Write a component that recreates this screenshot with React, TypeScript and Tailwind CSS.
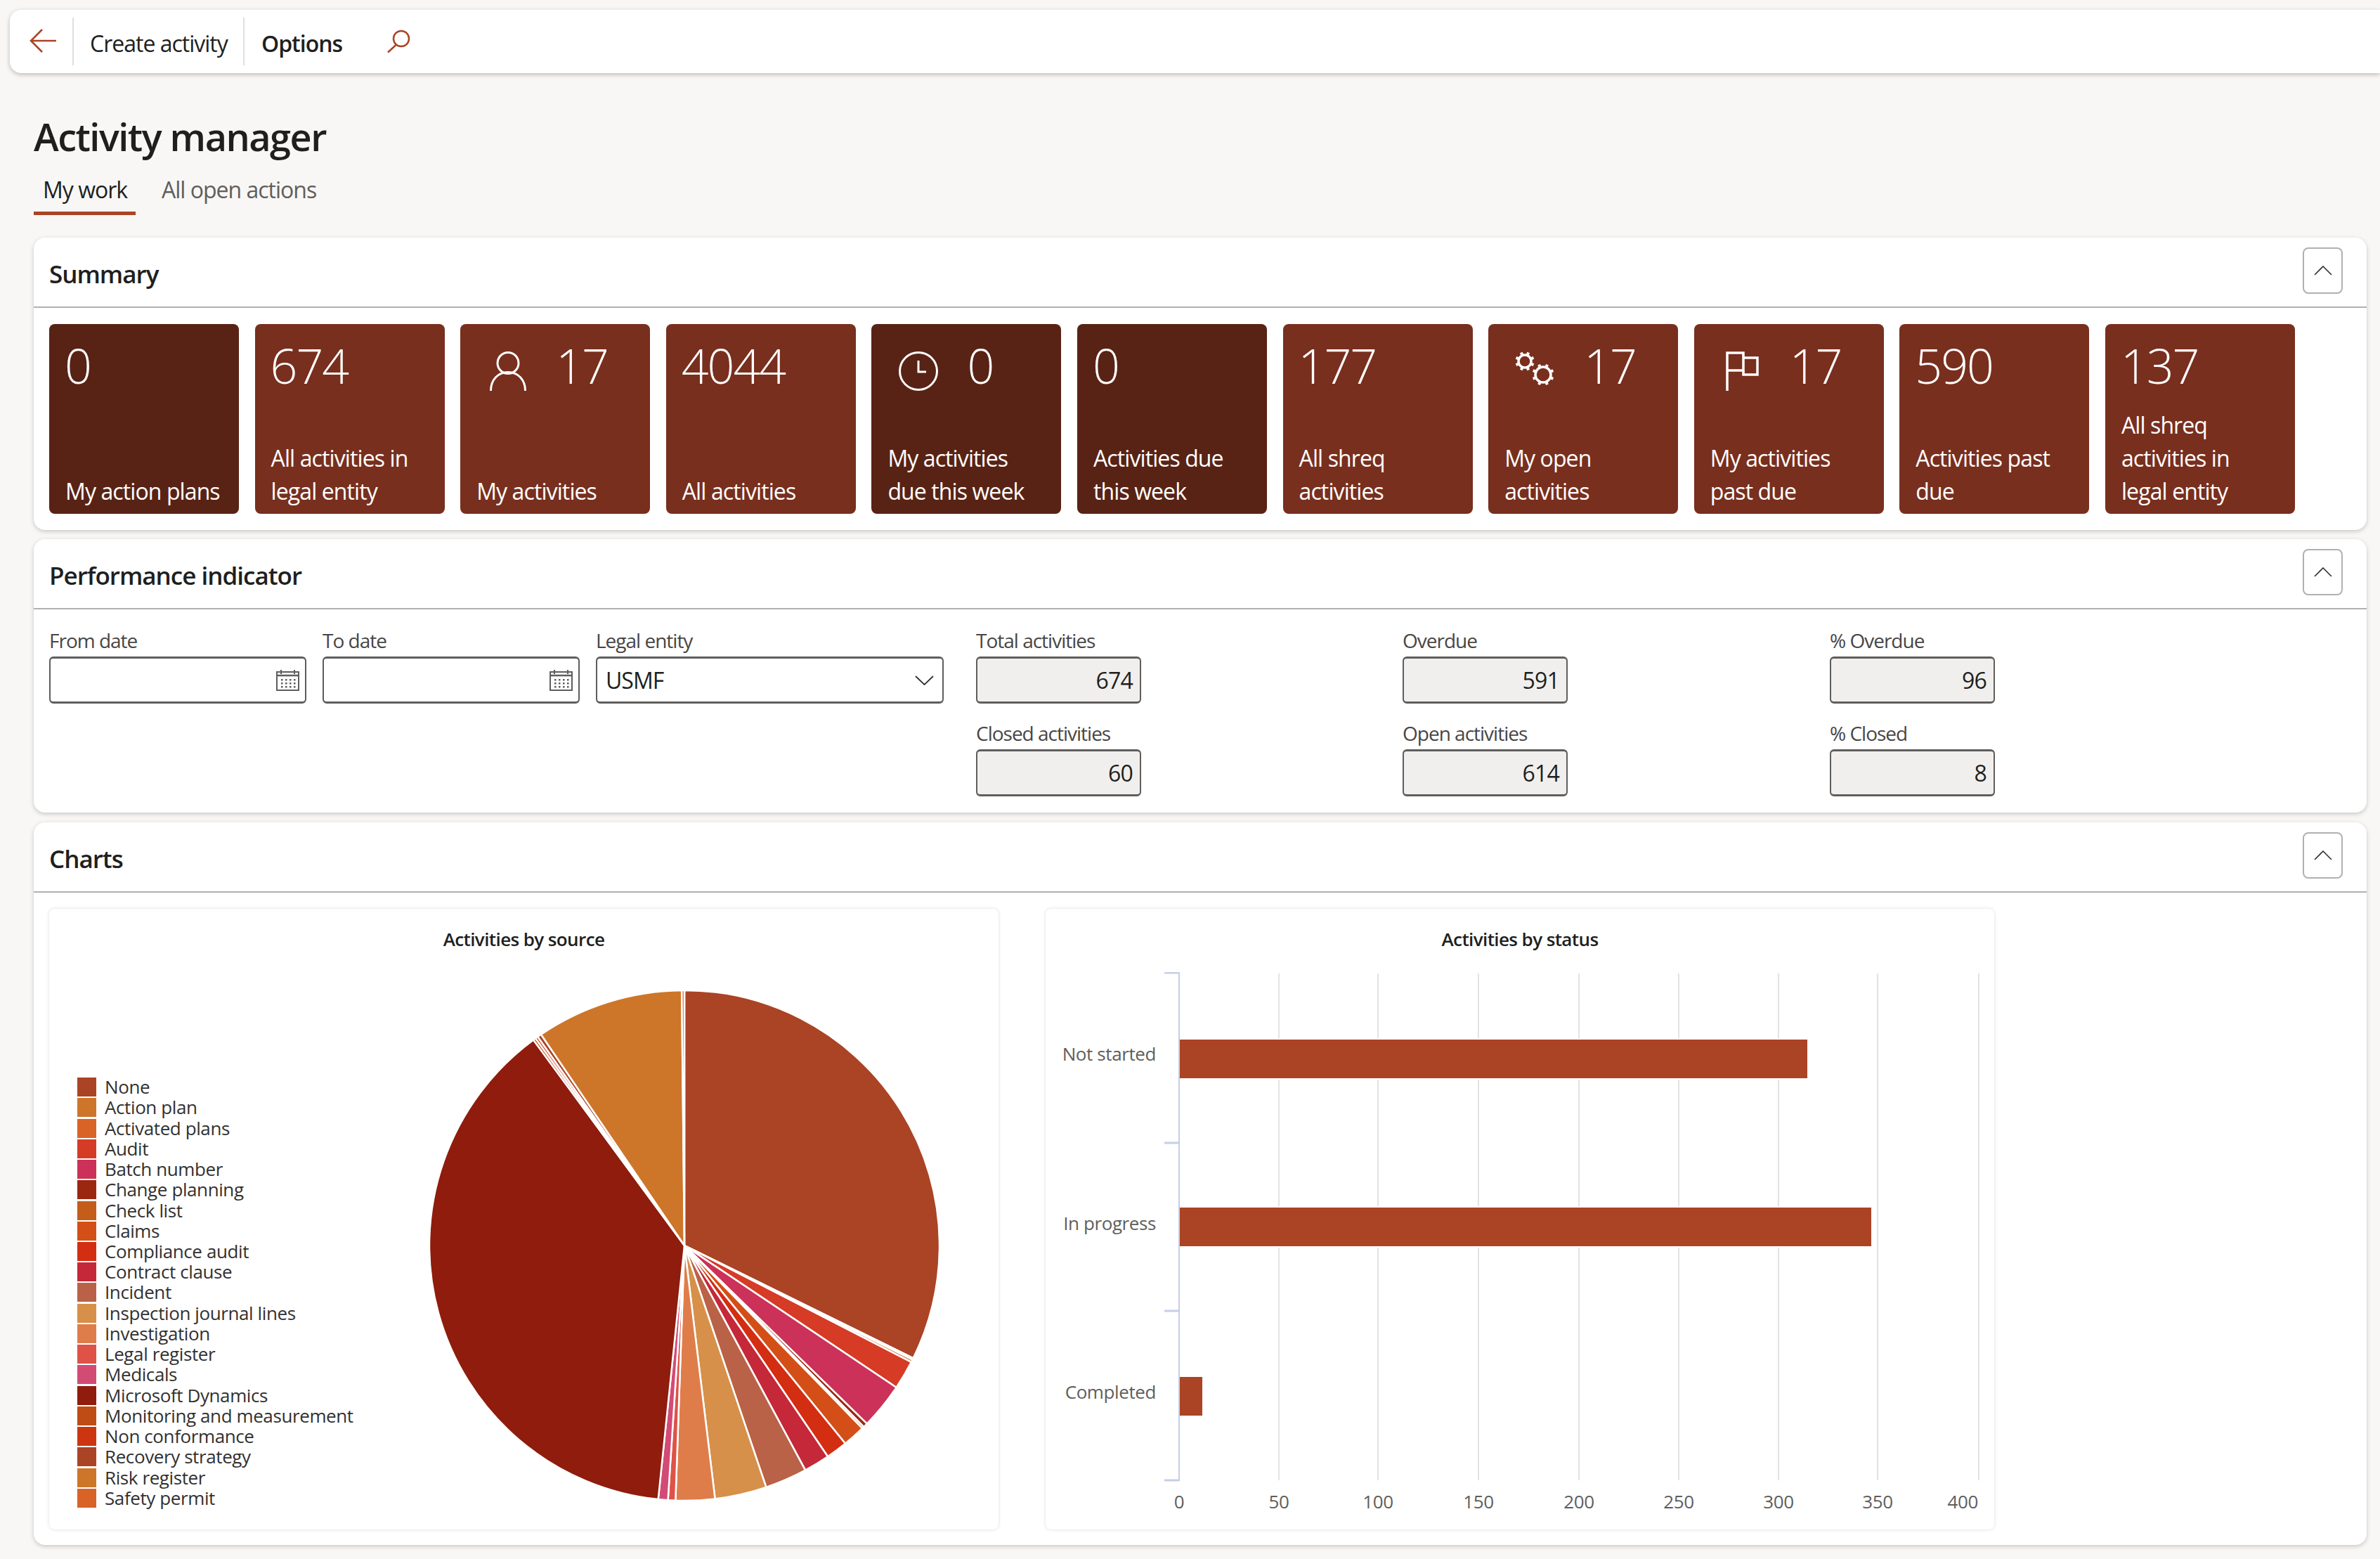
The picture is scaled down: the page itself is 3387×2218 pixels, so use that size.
import type { ReactNode } from "react";

const FONT = "font-['Open_Sans','Noto_Sans',sans-serif]";

const tiles = [
  { value: "0", label: ["My action plans"], dark: true },
  { value: "674", label: ["All activities in", "legal entity"] },
  { value: "17", label: ["My activities"], icon: "user" },
  { value: "4044", label: ["All activities"] },
  { value: "0", label: ["My activities", "due this week"], dark: true, icon: "clock" },
  { value: "0", label: ["Activities due", "this week"], dark: true },
  { value: "177", label: ["All shreq", "activities"] },
  { value: "17", label: ["My open", "activities"], icon: "gears" },
  { value: "17", label: ["My activities", "past due"], icon: "flag" },
  { value: "590", label: ["Activities past", "due"] },
  { value: "137", label: ["All shreq", "activities in", "legal entity"] },
];

// end angle of each slice, clockwise from 12 o'clock
const slices = [
  { name: "None", color: "#ab4325", end: 116.2 },
  { name: "Action plan", color: "#cd7629", end: 116.6 },
  { name: "Activated plans", color: "#d96327", end: 117.2 },
  { name: "Audit", color: "#d63b25", end: 123.8 },
  { name: "Batch number", color: "#cb3159", end: 134.3 },
  { name: "Change planning", color: "#9c2710", end: 135.3 },
  { name: "Check list", color: "#c45d1a", end: 135.8 },
  { name: "Claims", color: "#d34f17", end: 140.9 },
  { name: "Compliance audit", color: "#d32d12", end: 145.8 },
  { name: "Contract clause", color: "#c42839", end: 151.7 },
  { name: "Incident", color: "#b96247", end: 161.3 },
  { name: "Inspection journal lines", color: "#d6904a", end: 173.1 },
  { name: "Investigation", color: "#df7d4a", end: 182 },
  { name: "Legal register", color: "#df5248", end: 183.7 },
  { name: "Medicals", color: "#d24b75", end: 185.9 },
  { name: "Microsoft Dynamics", color: "#8f1c0c", end: 323.7 },
  { name: "Monitoring and measurement", color: "#bf4c14", end: 324.3 },
  { name: "Non conformance", color: "#cd3511", end: 324.9 },
  { name: "Recovery strategy", color: "#ab4325", end: 325.8 },
  { name: "Risk register", color: "#cd7629", end: 359.4 },
  { name: "Safety permit", color: "#d96327", end: 360 },
];

function slicePath(start: number, end: number) {
  const r = 363;
  const pt = (a: number) => {
    const t = (a * Math.PI) / 180;
    return `${(r + Math.sin(t) * r).toFixed(2)} ${(r - Math.cos(t) * r).toFixed(2)}`;
  };
  return `M${r} ${r} L${pt(start)} A${r} ${r} 0 ${end - start > 180 ? 1 : 0} 1 ${pt(end)} Z`;
}

function UserIcon() {
  return (
    <svg width="52" height="56" viewBox="0 0 52 56" fill="none" stroke="white" strokeWidth="3">
      <ellipse cx="26" cy="16.500" rx="15" ry="15" />
      <path d="M1.500 56C1.500 40 12 29.500 26 29.500S50.500 40 50.500 56" />
    </svg>
  );
}

function ClockIcon() {
  return (
    <svg width="56" height="56" viewBox="0 0 56 56" fill="none" stroke="white" strokeWidth="3">
      <circle cx="28" cy="28" r="26.500" />
      <path d="M28 13v16h11" />
    </svg>
  );
}

function Gear({ cx, cy, r, tooth }: { cx: number; cy: number; r: number; tooth: number }) {
  return (
    <g>
      <circle cx={cx} cy={cy} r={r} strokeWidth="3.500" />
      {[0, 45, 90, 135, 180, 225, 270, 315].map((a) => {
        const t = ((a + 22.5) * Math.PI) / 180;
        return (
          <line
            key={a}
            x1={cx + Math.cos(t) * r}
            y1={cy + Math.sin(t) * r}
            x2={cx + Math.cos(t) * (r + tooth)}
            y2={cy + Math.sin(t) * (r + tooth)}
            strokeWidth="4"
          />
        );
      })}
    </g>
  );
}

function GearsIcon() {
  return (
    <svg width="58" height="50" viewBox="0 0 58 50" fill="none" stroke="white">
      <Gear cx={14} cy={14} r={9} tooth={4.5} />
      <Gear cx={40} cy={33} r={11} tooth={4.5} />
    </svg>
  );
}

function FlagIcon() {
  return (
    <svg width="47" height="56" viewBox="0 0 47 56" fill="none" stroke="white" strokeWidth="3.500">
      <path d="M2 56V2h23v25H2" />
      <path d="M25 9h20v24H25v-6" />
    </svg>
  );
}

function CalendarIcon() {
  const dots = [];
  for (const y of [13, 18, 23]) {
    for (const x of [7, 13, 19, 25]) dots.push([x, y]);
  }
  return (
    <svg width="33" height="30" viewBox="0 0 33 30" fill="none" stroke="#605e5c" strokeWidth="2">
      <rect x="1" y="3" width="31" height="26" />
      <path d="M1 8h31" strokeWidth="2.500" />
      <path d="M7 0v6M26 0v6" />
      {dots.map(([x, y]) => (
        <rect key={`${x}-${y}`} x={x} y={y} width="2.500" height="2.500" fill="#605e5c" stroke="none" />
      ))}
    </svg>
  );
}

function Tile({ tile }: { tile: (typeof tiles)[number] }) {
  return (
    <div
      className={`flex h-[270px] w-[270px] shrink-0 flex-col justify-between rounded-lg pb-[9px] text-white ${tile.dark ? "bg-[#582315]" : "bg-[#782f1e]"}`}
    >
      <div className="flex h-[95px] items-start pt-[25px]">
        {tile.icon === "user" && <div className="w-[136px] shrink-0 pl-[42px] pt-[14px]"><UserIcon /></div>}
        {tile.icon === "clock" && <div className="w-[136px] shrink-0 pl-[39px] pt-[14px]"><ClockIcon /></div>}
        {tile.icon === "gears" && <div className="w-[136px] shrink-0 pl-[38px] pt-[14px]"><GearsIcon /></div>}
        {tile.icon === "flag" && <div className="w-[136px] shrink-0 pl-[45px] pt-[14px]"><FlagIcon /></div>}
        <span className={`text-[68px] leading-[68px] font-light tracking-[-2px] ${tile.icon ? "" : "pl-[22px]"}`}>{tile.value}</span>
      </div>
      <div className="pl-[23px] text-[32px] leading-[47px] tracking-[-0.9px]">
        {tile.label.map((line) => (
          <div key={line} className="whitespace-nowrap">{line}</div>
        ))}
      </div>
    </div>
  );
}

function CollapseButton() {
  return (
    <div className="flex h-[66px] w-[57px] items-center justify-center rounded-lg border-2 border-[#b3b0ad] bg-white">
      <svg width="26" height="14" viewBox="0 0 26 14" fill="none" stroke="#323130" strokeWidth="1.600">
        <path d="M1 13 13 1l12 12" />
      </svg>
    </div>
  );
}

function Card({ title, className, children }: { title: string; className: string; children: ReactNode }) {
  return (
    <section className={`rounded-2xl bg-white shadow-[0_2px_6px_rgba(0,0,0,0.2)] ${className}`}>
      <div className="flex h-[100px] items-start justify-between border-b-2 border-[#b3b0ad] pl-[22px] pr-[34px] pt-[14px]">
        <h2 className="mt-[14px] text-[35px] leading-[48px] font-semibold tracking-[-1px] text-[#201f1e]">{title}</h2>
        <CollapseButton />
      </div>
      {children}
    </section>
  );
}

function Field({ label, width, children, className }: { label: string; width: string; children: ReactNode; className: string }) {
  return (
    <div className={width}>
      <div className="mb-[9px] h-[28px] text-[28px] leading-[28px] tracking-[-1px] whitespace-nowrap text-[#484644]">{label}</div>
      <div className={`flex h-[67px] items-center rounded-md border-2 border-y-[3px] border-[#605e5c] ${className}`}>{children}</div>
    </div>
  );
}

function ReadOnly({ label, value }: { label: string; value: string }) {
  return (
    <Field label={label} width="w-[235px]" className="justify-end bg-[#f1efed] pr-[10px] text-[32px] tracking-[-0.8px] text-[#201f1e]">
      {value}
    </Field>
  );
}

function PieChart() {
  let start = 0;
  return (
    <svg width="726" height="726" viewBox="0 0 726 726">
      {slices.map((s) => {
        const d = slicePath(start, s.end);
        start = s.end;
        return <path key={s.name} d={d} fill={s.color} stroke="white" strokeWidth="2.500" strokeLinejoin="round" />;
      })}
    </svg>
  );
}

function BarChart() {
  const ticks = [0, 50, 100, 150, 200, 250, 300, 350, 400];
  const gridX = [190, 332, 473, 616, 759, 901, 1043, 1184, 1328];
  const axisTicks = [1, 243, 482, 723];
  const bars = [
    { label: "Not started", end: 1084, y: 96, labelY: 126 },
    { label: "In progress", end: 1175, y: 335, labelY: 367 },
    { label: "Completed", end: 223, y: 576, labelY: 607 },
  ];
  return (
    <svg width="1350" height="790" viewBox="0 0 1350 790">
      {gridX.slice(1).map((x) => (
        <line key={x} x1={x} x2={x} y1="2" y2="723" stroke="#e3e3e3" strokeWidth="2" />
      ))}
      {bars.map((b) => (
        <g key={b.label}>
          <rect x="190" y={b.y} width={b.end - 190} height="55" fill="#ab4325" stroke="white" strokeWidth="4" paintOrder="stroke" />
          <text x="157" y={b.labelY} textAnchor="end" fontSize="26" letterSpacing="-0.4" fill="#605e5c">{b.label}</text>
        </g>
      ))}
      <line x1="190" x2="190" y1="0" y2="724" stroke="#c5cfe6" strokeWidth="2" />
      {axisTicks.map((y) => (
        <line key={y} x1="169" x2="190" y1={y} y2={y} stroke="#c5cfe6" strokeWidth="3" />
      ))}
      {ticks.map((t, i) => (
        <text key={t} x={i === 8 ? 1327 : gridX[i]} y="763" textAnchor={i === 8 ? "end" : "middle"} fontSize="26" letterSpacing="-0.4" fill="#605e5c">{t}</text>
      ))}
    </svg>
  );
}

export default function App() {
  return (
    <div className={`h-[2218px] overflow-hidden bg-[#f8f7f5] pl-[14px] pt-[14px] ${FONT} text-[#201f1e]`}>
      <header className="flex h-[90px] items-center rounded-l-2xl bg-white shadow-[0_2px_6px_rgba(0,0,0,0.25)]">
        <div className="flex h-[68px] w-[91px] items-center justify-center border-r-2 border-[#e1dfdd] pb-[2px] pl-[4px]">
          <svg width="38" height="34" viewBox="0 0 38 34" fill="none" stroke="#ab4325" strokeWidth="2.500">
            <path d="M18 1 2 17l16 16M2 17h36" />
          </svg>
        </div>
        <div className="flex h-[68px] w-[243px] items-center border-r-2 border-[#e1dfdd] pl-[23px] pt-[5px] text-[32px] tracking-[-1px] whitespace-nowrap">Create activity</div>
        <div className="flex h-[68px] items-center pl-[24px] pt-[5px] text-[32px] font-semibold tracking-[-1px]">Options</div>
        <svg className="ml-[63px]" width="34" height="34" viewBox="0 0 34 34" fill="none" stroke="#ab4325" strokeWidth="2.500">
          <circle cx="21" cy="13" r="11" />
          <path d="m14 21.500-12 11" />
        </svg>
      </header>

      <main className="w-[3354px] pl-[34px]">
        <h1 className="mt-[52px] text-[54px] leading-[76px] font-semibold tracking-[-1.5px] text-[#201f1e]">Activity manager</h1>
        <nav className="mt-[16px] flex text-[32px] leading-[44px] tracking-[-1px]">
          <div className="w-[145px] border-b-[5px] border-[#ab4325] pb-[9px] pl-[13px]">My work</div>
          <div className="pl-[37px] text-[#605e5c]">All open actions</div>
        </nav>

        <Card title="Summary" className="mt-[32px] h-[416px]">
          <div className="flex gap-[22.600px] pl-[22px] pt-[23px]">
            {tiles.map((tile, i) => (
              <Tile key={i} tile={tile} />
            ))}
          </div>
        </Card>

        <Card title="Performance indicator" className="mt-[13px] h-[389px]">
          <div className="flex pl-[22px] pt-[30px]">
            <div className="flex gap-[23px]">
              <Field label="From date" width="w-[366px]" className="justify-end pr-[8px]"><CalendarIcon /></Field>
              <Field label="To date" width="w-[366px]" className="justify-end pr-[8px]"><CalendarIcon /></Field>
              <Field label="Legal entity" width="w-[495px]" className="justify-between px-[12px] text-[32px] tracking-[-1px]">
                <span>USMF</span>
                <svg width="27" height="14" viewBox="0 0 27 14" fill="none" stroke="#323130" strokeWidth="1.800"><path d="m1 1 12.500 12L26 1" /></svg>
              </Field>
            </div>
            <div className="ml-[46px] grid grid-cols-[607px_608px_235px] gap-y-[28px]">
              <ReadOnly label="Total activities" value="674" />
              <ReadOnly label="Overdue" value="591" />
              <ReadOnly label="% Overdue" value="96" />
              <ReadOnly label="Closed activities" value="60" />
              <ReadOnly label="Open activities" value="614" />
              <ReadOnly label="% Closed" value="8" />
            </div>
          </div>
        </Card>

        <Card title="Charts" className="mt-[14px] h-[1028px]">
          <div className="flex gap-[67px] pl-[22px] pt-[23px]">
            <div className="h-[883px] w-[1351px] rounded-lg bg-white shadow-[0_0_5px_rgba(0,0,0,0.14)]">
              <div className="pb-[2px] pt-[26px] text-center text-[26px] leading-[34px] font-semibold tracking-[-0.6px]">Activities by source</div>
              <div className="flex items-start">
                <ul className="ml-[40px] mt-[177px] w-[540px]">
                  {slices.map((s) => (
                    <li key={s.name} className="flex h-[29.240px] items-center gap-[12px] text-[26px] leading-[29px] tracking-[-0.4px] text-[#323130]">
                      <span className="h-[27px] w-[27px] shrink-0" style={{ backgroundColor: s.color }} />
                      <span className="whitespace-nowrap">{s.name}</span>
                    </li>
                  ))}
                </ul>
                <div className="ml-[-39px] mt-[54px]"><PieChart /></div>
              </div>
            </div>
            <div className="h-[883px] w-[1350px] rounded-lg bg-white shadow-[0_0_5px_rgba(0,0,0,0.14)]">
              <div className="pb-[2px] pt-[26px] text-center text-[26px] leading-[34px] font-semibold tracking-[-0.6px]">Activities by status</div>
              <div className="mt-[28px]"><BarChart /></div>
            </div>
          </div>
        </Card>
      </main>
    </div>
  );
}
